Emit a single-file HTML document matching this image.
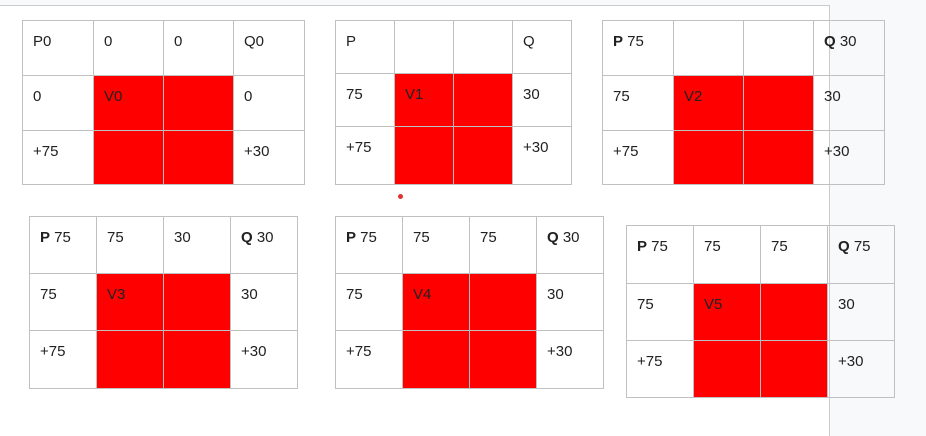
<!DOCTYPE html>
<html><head><meta charset="utf-8"><style>
body{margin:0;width:926px;height:428px;background:#f8f9fa;position:relative;overflow:hidden;font-family:"Liberation Sans",sans-serif;font-size:15px;color:#202122}
#main{position:absolute;left:0;top:5px;width:829px;height:430px;background:#fff;border-top:1px solid #c8ccd1;border-right:1px solid #c8ccd1}
table{position:absolute;border-collapse:collapse;table-layout:fixed}
td{border:1px solid #c0c0c0;padding:0 0 0 10px;vertical-align:top;padding-top:12px;box-sizing:border-box;line-height:17px}
td.r{background:#f00}
.dot{position:absolute;left:398px;top:194px;width:5px;height:5px;border-radius:50%;background:#d33}
</style></head><body>
<div id="main"></div>
<table style="left:22px;top:20px;width:282px">
<col style="width:71px"><col style="width:70px"><col style="width:70px"><col style="width:71px">
<tr style="height:55px"><td>P0</td><td>0</td><td>0</td><td>Q0</td></tr>
<tr style="height:55px"><td>0</td><td class="r">V0</td><td class="r"></td><td>0</td></tr>
<tr style="height:54px"><td>+75</td><td class="r"></td><td class="r"></td><td>+30</td></tr>
</table>
<table style="left:335px;top:20px;width:236px">
<col style="width:59px"><col style="width:59px"><col style="width:59px"><col style="width:59px">
<tr style="height:53px"><td>P</td><td></td><td></td><td>Q</td></tr>
<tr style="height:53px"><td>75</td><td class="r">V1</td><td class="r"></td><td>30</td></tr>
<tr style="height:58px"><td>+75</td><td class="r"></td><td class="r"></td><td>+30</td></tr>
</table>
<table style="left:602px;top:20px;width:282px">
<col style="width:71px"><col style="width:70px"><col style="width:70px"><col style="width:71px">
<tr style="height:55px"><td><b>P</b> 75</td><td></td><td></td><td><b>Q</b> 30</td></tr>
<tr style="height:55px"><td>75</td><td class="r">V2</td><td class="r"></td><td>30</td></tr>
<tr style="height:54px"><td>+75</td><td class="r"></td><td class="r"></td><td>+30</td></tr>
</table>
<div class="dot"></div>
<table style="left:29px;top:216px;width:268px">
<col style="width:67px"><col style="width:67px"><col style="width:67px"><col style="width:67px">
<tr style="height:57px"><td><b>P</b> 75</td><td>75</td><td>30</td><td><b>Q</b> 30</td></tr>
<tr style="height:57px"><td>75</td><td class="r">V3</td><td class="r"></td><td>30</td></tr>
<tr style="height:58px"><td>+75</td><td class="r"></td><td class="r"></td><td>+30</td></tr>
</table>
<table style="left:335px;top:216px;width:268px">
<col style="width:67px"><col style="width:67px"><col style="width:67px"><col style="width:67px">
<tr style="height:57px"><td><b>P</b> 75</td><td>75</td><td>75</td><td><b>Q</b> 30</td></tr>
<tr style="height:57px"><td>75</td><td class="r">V4</td><td class="r"></td><td>30</td></tr>
<tr style="height:58px"><td>+75</td><td class="r"></td><td class="r"></td><td>+30</td></tr>
</table>
<table style="left:626px;top:225px;width:268px">
<col style="width:67px"><col style="width:67px"><col style="width:67px"><col style="width:67px">
<tr style="height:58px"><td><b>P</b> 75</td><td>75</td><td>75</td><td><b>Q</b> 75</td></tr>
<tr style="height:57px"><td>75</td><td class="r">V5</td><td class="r"></td><td>30</td></tr>
<tr style="height:57px"><td>+75</td><td class="r"></td><td class="r"></td><td>+30</td></tr>
</table>
</body></html>
